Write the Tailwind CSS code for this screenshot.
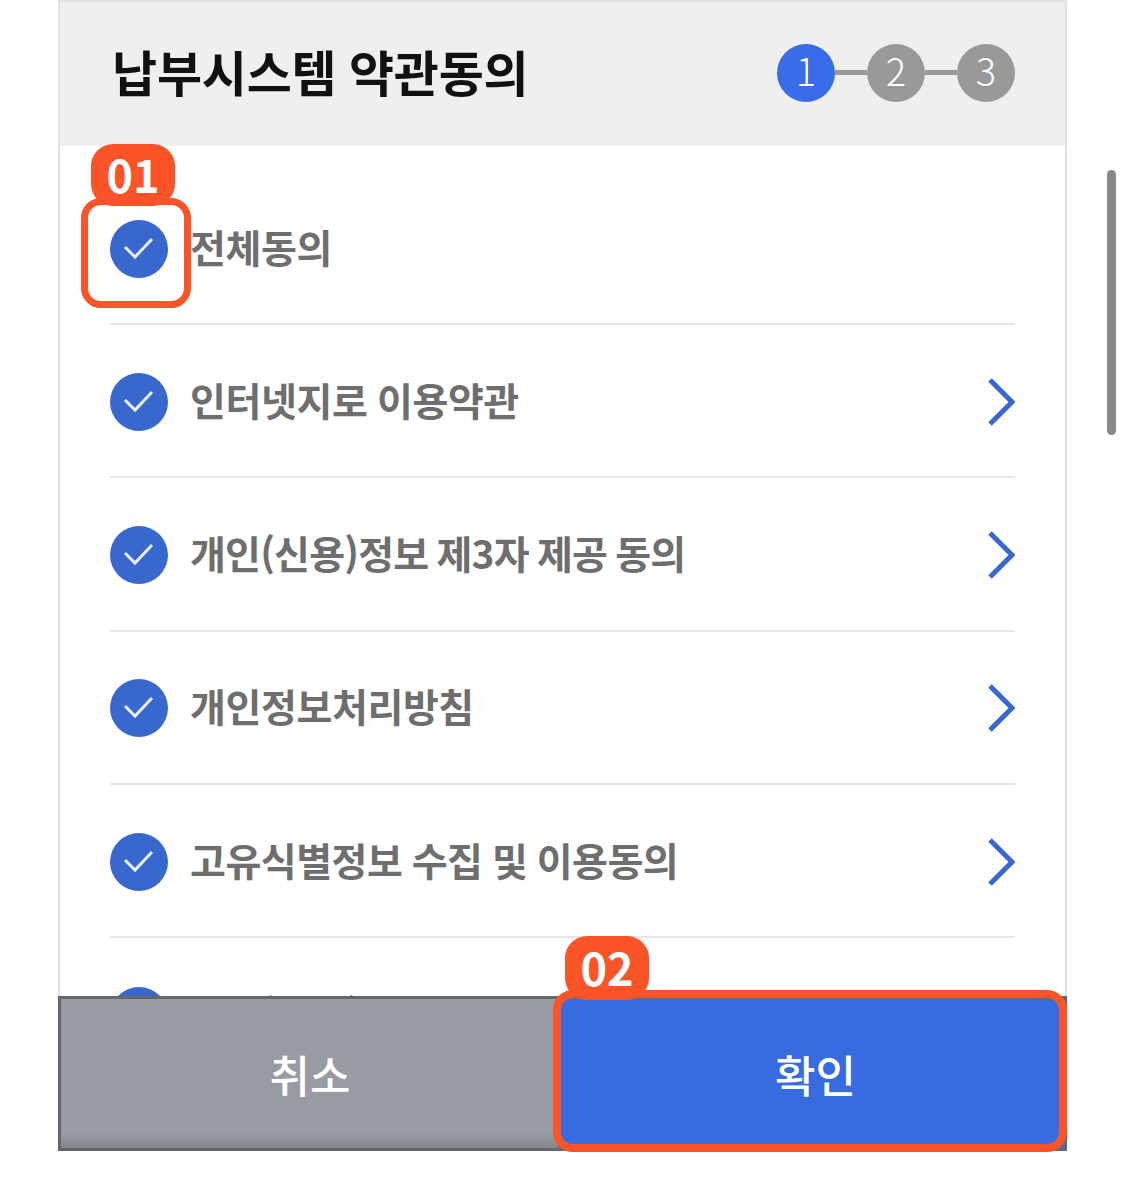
<!DOCTYPE html>
<html lang="ko">
<head>
    <meta charset="UTF-8">
    <title>납부시스템 약관동의</title>
    <script src="https://cdn.jsdelivr.net/npm/@tailwindcss/browser@4"></script>
</head>
<body class="bg-white font-['Noto_Sans_CJK_KR',sans-serif]">
    <div class="relative w-[1125px] h-[1193px] overflow-hidden bg-white">

        <!-- 약관 패널 -->
        <div class="relative ml-[58px] w-[1009px] h-[1151px] border-x-2 border-t-2 border-[#e2e2e4] bg-white">
            <header class="flex h-[144px] items-center justify-between bg-[#efefef] pl-[52px] pr-[50px]">
                <h1 class="-mt-[6px] text-[49px] font-bold tracking-[-0.2px] [word-spacing:-1px] text-[#111]">납부시스템 약관동의</h1>
                <div class="-mt-[3px] flex items-center">
                    <span class="flex size-[58px] items-center justify-center rounded-full bg-[#3a6be8] pb-[6px] text-[38px] font-light text-white">1</span>
                    <span class="h-[5px] w-[32px] bg-[#999]"></span>
                    <span class="flex size-[58px] items-center justify-center rounded-full bg-[#999] pb-[6px] text-[38px] font-light text-white">2</span>
                    <span class="h-[5px] w-[32px] bg-[#999]"></span>
                    <span class="flex size-[58px] items-center justify-center rounded-full bg-[#999] pb-[6px] text-[38px] font-light text-white">3</span>
                </div>
            </header>

            <!-- 약관 목록 -->
            <ul class="px-[50px] text-[39px] font-bold tracking-[-0.4px] [word-spacing:-1px] text-[#6e6e6e]">
                <li class="flex h-[179px] items-center gap-[22px] border-b-2 border-[#e6e6e6] pt-[27px]">
                    <svg class="mt-[2px] size-[58px] shrink-0" viewBox="0 0 58 58"><circle cx="29" cy="29" r="29" fill="#3867ce"/><path d="M15 27l10 10 17-18" fill="none" stroke="#e8eefb" stroke-width="3"/></svg>
                    <span class="pb-[3px]">전체동의</span>
                </li>
                <li class="flex h-[153.3px] items-center gap-[22px] border-b-2 border-[#e6e6e6]">
                    <svg class="mt-[2px] size-[58px] shrink-0" viewBox="0 0 58 58"><circle cx="29" cy="29" r="29" fill="#3867ce"/><path d="M15 27l10 10 17-18" fill="none" stroke="#e8eefb" stroke-width="3"/></svg>
                    <span class="grow pb-[3px]">인터넷지로 이용약관</span>
                    <svg class="mt-[2px] h-[48px] w-[28px]" viewBox="0 0 28 48"><path d="M3 2l22 22L3 46" fill="none" stroke="#3867ce" stroke-width="5"/></svg>
                </li>
                <li class="flex h-[153.3px] items-center gap-[22px] border-b-2 border-[#e6e6e6]">
                    <svg class="mt-[2px] size-[58px] shrink-0" viewBox="0 0 58 58"><circle cx="29" cy="29" r="29" fill="#3867ce"/><path d="M15 27l10 10 17-18" fill="none" stroke="#e8eefb" stroke-width="3"/></svg>
                    <span class="grow pb-[3px] tracking-[-0.8px] [word-spacing:-2px]">개인(신용)정보 제3자 제공 동의</span>
                    <svg class="mt-[2px] h-[48px] w-[28px]" viewBox="0 0 28 48"><path d="M3 2l22 22L3 46" fill="none" stroke="#3867ce" stroke-width="5"/></svg>
                </li>
                <li class="flex h-[153.3px] items-center gap-[22px] border-b-2 border-[#e6e6e6]">
                    <svg class="mt-[2px] size-[58px] shrink-0" viewBox="0 0 58 58"><circle cx="29" cy="29" r="29" fill="#3867ce"/><path d="M15 27l10 10 17-18" fill="none" stroke="#e8eefb" stroke-width="3"/></svg>
                    <span class="grow pb-[3px]">개인정보처리방침</span>
                    <svg class="mt-[2px] h-[48px] w-[28px]" viewBox="0 0 28 48"><path d="M3 2l22 22L3 46" fill="none" stroke="#3867ce" stroke-width="5"/></svg>
                </li>
                <li class="flex h-[153.3px] items-center gap-[22px] border-b-2 border-[#e6e6e6]">
                    <svg class="mt-[2px] size-[58px] shrink-0" viewBox="0 0 58 58"><circle cx="29" cy="29" r="29" fill="#3867ce"/><path d="M15 27l10 10 17-18" fill="none" stroke="#e8eefb" stroke-width="3"/></svg>
                    <span class="grow pb-[3px] tracking-[-0.5px]">고유식별정보 수집 및 이용동의</span>
                    <svg class="mt-[2px] h-[48px] w-[28px]" viewBox="0 0 28 48"><path d="M3 2l22 22L3 46" fill="none" stroke="#3867ce" stroke-width="5"/></svg>
                </li>
                <li class="flex h-[153.3px] items-center gap-[22px]">
                    <svg class="mt-[2px] size-[58px] shrink-0" viewBox="0 0 58 58"><circle cx="29" cy="29" r="29" fill="#3867ce"/></svg>
                    <span class="grow pb-[3px]">개인(신용)정보 조회 동의</span>
                </li>
            </ul>

            <!-- 하단 버튼 -->
            <div class="absolute -inset-x-[2px] top-[994px] flex h-[155px] border-3 border-[#66676b] bg-[#989ba3] text-[44px] font-medium">
                <button class="w-[497px] bg-gradient-to-b from-[#989ba3] from-90% to-[#85878e] pl-[1px] text-white">취소</button>
                <button class="grow bg-[#386be0] pl-[9px] text-white">확인</button>
            </div>
        </div>

        <!-- 안내 표시 01 -->
        <div class="absolute left-[91px] top-[144px] flex h-[62px] w-[84px] items-center justify-center rounded-[22px] bg-[#fb5429] pb-[3px] text-[45px] leading-none font-bold text-white">01</div>
        <div class="absolute left-[81px] top-[198px] size-[110px] rounded-[20px] border-[7px] border-[#fb5429]"></div>

        <!-- 안내 표시 02 -->
        <div class="absolute left-[565px] top-[936px] flex h-[64px] w-[84px] items-center justify-center rounded-[22px] bg-[#fb5429] pb-[3px] text-[45px] leading-none font-bold text-white">02</div>
        <div class="absolute left-[553px] top-[990px] h-[162px] w-[514px] rounded-[20px] border-[8px] border-[#fb5429]"></div>

        <!-- 스크롤바 -->
        <div class="absolute left-[1107px] top-[170px] h-[265px] w-[9px] rounded-full bg-[#888]"></div>
    </div>
</body>
</html>
